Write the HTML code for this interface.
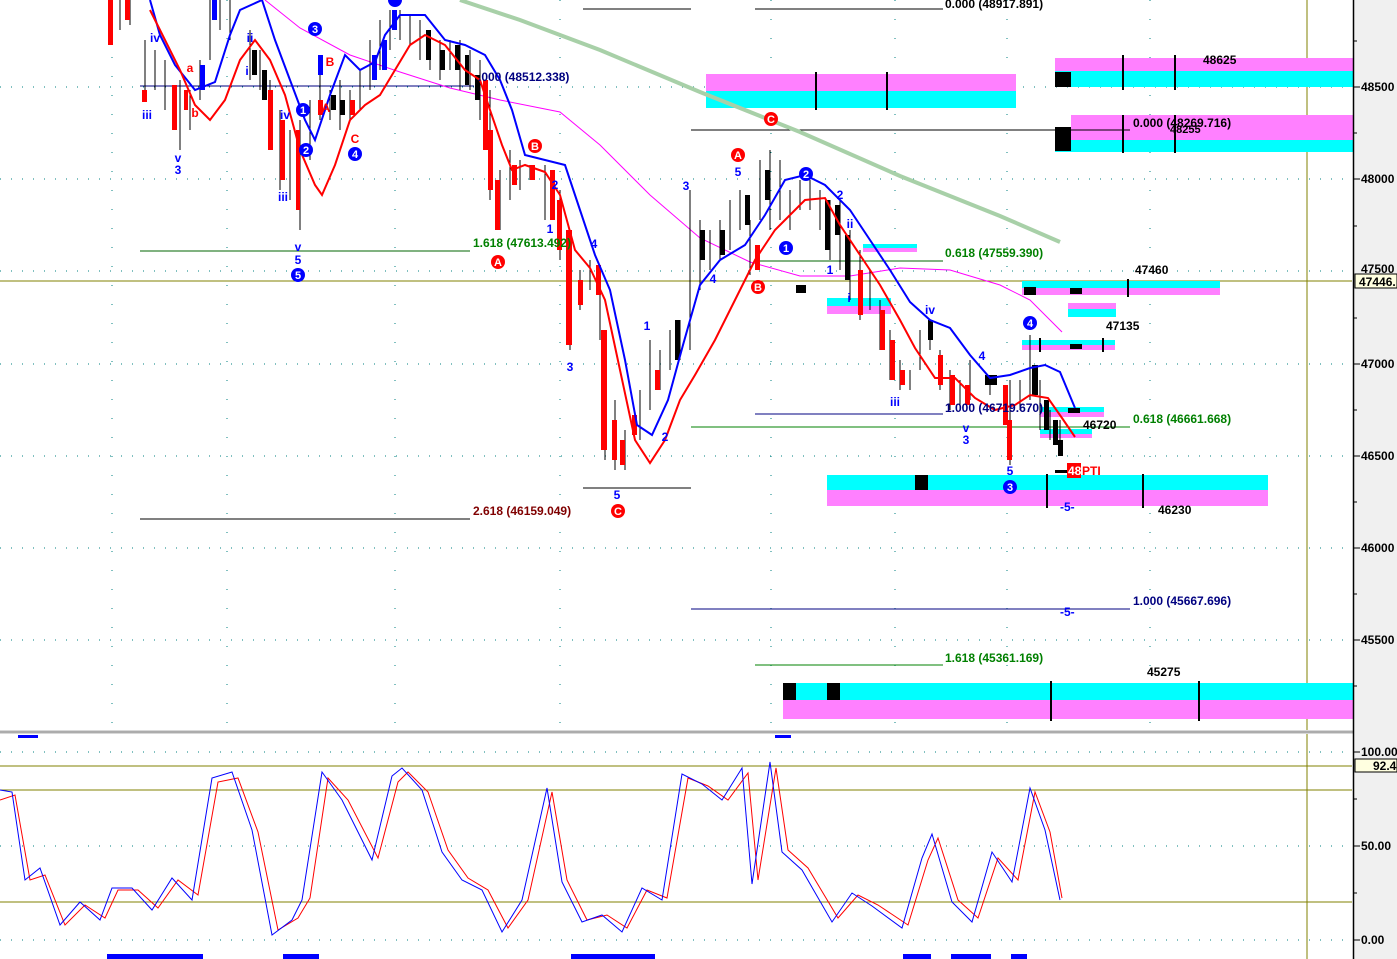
<!DOCTYPE html>
<html><head><meta charset="utf-8"><style>
html,body{margin:0;padding:0;background:#fff;}
svg{display:block;font-family:"Liberation Sans",Arial,sans-serif;font-weight:bold;}
</style></head><body>
<svg width="1397" height="959" viewBox="0 0 1397 959" xmlns="http://www.w3.org/2000/svg">
<rect width="1397" height="959" fill="#fff"/>
<!-- grid -->
<g stroke="#008080" stroke-width="1" stroke-dasharray="1,10">
<line x1="0" y1="87" x2="1352" y2="87"/><line x1="0" y1="179" x2="1352" y2="179"/>
<line x1="0" y1="271" x2="1352" y2="271"/><line x1="0" y1="364" x2="1352" y2="364"/>
<line x1="0" y1="456" x2="1352" y2="456"/><line x1="0" y1="548" x2="1352" y2="548"/>
<line x1="0" y1="640" x2="1352" y2="640"/>
<line x1="0" y1="752" x2="1352" y2="752"/><line x1="0" y1="846" x2="1352" y2="846"/><line x1="0" y1="940" x2="1352" y2="940"/>
</g>
<g stroke="#008080" stroke-width="1" stroke-dasharray="1,18">
<line x1="112" y1="0" x2="112" y2="730"/><line x1="227" y1="0" x2="227" y2="730"/><line x1="395" y1="0" x2="395" y2="730"/>
<line x1="560" y1="0" x2="560" y2="730"/><line x1="771" y1="0" x2="771" y2="730"/><line x1="895" y1="0" x2="895" y2="730"/>
<line x1="1007" y1="0" x2="1007" y2="730"/><line x1="1150" y1="0" x2="1150" y2="730"/>
</g>
<!-- olive lines -->
<g stroke="#808000" stroke-width="1">
<line x1="1307" y1="0" x2="1307" y2="959"/>
<line x1="0" y1="281" x2="1352" y2="281"/>
<line x1="0" y1="766" x2="1352" y2="766"/><line x1="0" y1="790" x2="1352" y2="790"/><line x1="0" y1="902" x2="1352" y2="902"/>
</g>
<!-- boxes -->
<rect x="706" y="74" width="310" height="17" fill="#ff80ff"/><rect x="706" y="91" width="310" height="17" fill="#00ffff"/>
<rect x="1055" y="58" width="298" height="13" fill="#ff80ff"/><rect x="1055" y="71" width="298" height="16" fill="#00ffff"/>
<rect x="1055" y="72" width="16" height="15" fill="#000"/>
<rect x="1071" y="115" width="282" height="25" fill="#ff80ff"/><rect x="1055" y="140" width="298" height="12" fill="#00ffff"/>
<rect x="1055" y="127" width="16" height="24" fill="#000"/>
<rect x="827" y="475" width="441" height="15" fill="#00ffff"/><rect x="827" y="490" width="441" height="16" fill="#ff80ff"/>
<rect x="915" y="475" width="13" height="15" fill="#000"/>
<rect x="783" y="683" width="570" height="17" fill="#00ffff"/><rect x="783" y="700" width="570" height="19" fill="#ff80ff"/>
<rect x="783" y="683" width="13" height="17" fill="#000"/><rect x="827" y="683" width="13" height="17" fill="#000"/>
<rect x="1022" y="281" width="198" height="7" fill="#00ffff"/><rect x="1022" y="288" width="198" height="7" fill="#ff80ff"/>
<rect x="1022" y="340" width="93" height="5" fill="#00ffff"/><rect x="1022" y="345" width="93" height="5" fill="#ff80ff"/>
<rect x="1068" y="303" width="48" height="6" fill="#ff80ff"/><rect x="1068" y="309" width="48" height="8" fill="#00ffff"/>
<rect x="863" y="244" width="54" height="4" fill="#00ffff"/><rect x="863" y="248" width="54" height="4" fill="#ff80ff"/>
<rect x="827" y="298" width="64" height="8" fill="#00ffff"/><rect x="827" y="306" width="64" height="8" fill="#ff80ff"/>
<rect x="1040" y="407" width="64" height="5" fill="#00ffff"/><rect x="1040" y="412" width="64" height="5" fill="#ff80ff"/>
<rect x="1040" y="429" width="52" height="5" fill="#00ffff"/><rect x="1040" y="434" width="52" height="4" fill="#ff80ff"/>
<g stroke="#000" stroke-width="2">
<line x1="816" y1="72" x2="816" y2="110"/><line x1="887" y1="72" x2="887" y2="110"/>
<line x1="1123" y1="55" x2="1123" y2="90"/><line x1="1175" y1="55" x2="1175" y2="90"/>
<line x1="1123" y1="115" x2="1123" y2="153"/><line x1="1175" y1="115" x2="1175" y2="153"/>
<line x1="1047" y1="474" x2="1047" y2="508"/><line x1="1143" y1="474" x2="1143" y2="508"/>
<line x1="1051" y1="681" x2="1051" y2="721"/><line x1="1199" y1="681" x2="1199" y2="721"/>
<line x1="1128" y1="279" x2="1128" y2="297"/><line x1="1103" y1="338" x2="1103" y2="352"/><line x1="1040" y1="338" x2="1040" y2="352"/>
</g>
<rect x="1024" y="287" width="12" height="8" fill="#000"/><rect x="1070" y="288" width="12" height="6" fill="#000"/>
<rect x="1070" y="344" width="12" height="5" fill="#000"/><rect x="1068" y="408" width="12" height="5" fill="#000"/>
<rect x="796" y="285" width="10" height="8" fill="#000"/>
<!-- fib lines -->
<g stroke-width="1">
<line x1="583" y1="9" x2="691" y2="9" stroke="#000"/><line x1="755" y1="9" x2="943" y2="9" stroke="#000"/>
<line x1="140" y1="86" x2="474" y2="86" stroke="#000080"/>
<line x1="691" y1="130" x2="1130" y2="130" stroke="#000"/>
<line x1="140" y1="251" x2="470" y2="251" stroke="#006400"/>
<line x1="755" y1="261" x2="943" y2="261" stroke="#006400"/>
<line x1="755" y1="414" x2="943" y2="414" stroke="#000080"/>
<line x1="691" y1="427" x2="1130" y2="427" stroke="#008000"/>
<line x1="583" y1="488" x2="691" y2="488" stroke="#000"/>
<line x1="140" y1="519" x2="470" y2="519" stroke="#000"/>
<line x1="691" y1="609" x2="1130" y2="609" stroke="#000080"/>
<line x1="755" y1="665" x2="943" y2="665" stroke="#008000"/>
</g>
<!-- green MA -->
<polyline fill="none" stroke="#a8d0a8" stroke-width="4" points="460,0 520,20 600,50 700,92 800,132 900,176 1000,216 1060,242"/>
<!-- magenta MA -->
<polyline fill="none" stroke="#ff00ff" stroke-width="1" points="265,0 300,28 350,55 400,72 450,88 500,100 560,112 600,145 650,195 700,238 750,262 800,276 850,276 900,268 950,270 1000,285 1030,300 1062,332"/>
<!-- candles (approx) -->
<g stroke="#000" stroke-width="1">
<path d="M110 0V45M120 0V30M130 0V25M145 40V100M155 50V90M165 60V110M180 80V150M190 90V130M200 60V100M210 0V60M220 0V30M230 0V40M250 30V80M260 50V90M270 80V130M280 110V190M290 130V200M300 120V230M310 100V160M320 60V120M330 90V120M340 80V130M350 90V120M360 70V110M370 40V90M380 20V70M390 10V50M400 10V40M410 15V45M420 20V60M430 30V70M440 40V80M450 40V70M460 40V90M470 50V90M480 60V120M490 90V200M500 170V230M510 150V200M520 160V190M530 165V180M545 165V220M560 190V260M570 230V350M580 270V310M590 260V290M600 270V340M605 330V460M615 400V470M625 430V470M640 390V440M650 340V410M660 350V390M670 330V370M680 320V360M690 190V350M700 220V290M710 230V270M720 220V260M730 200V250M740 190V230M750 220V275M760 160V220M770 150V230M780 160V220M790 190V230M800 180V210M810 180V210M820 190V230M830 200V260M840 200V270M850 230V300M860 250V320M870 270V310M880 300V350M890 330V380M900 360V390M910 370V390M920 330V370M930 320V350M940 350V390M950 370V410M960 380V410M970 360V400M990 375V395M1005 390V420M1010 380V465M1020 380V410M1030 335V400M1040 380V430M1050 410V440M1060 420V455"/>
</g>
<g fill="#ff0000">
<rect x="108" y="0" width="5" height="45"/><rect x="125" y="0" width="5" height="20"/><rect x="142" y="90" width="5" height="12"/>
<rect x="172" y="85" width="5" height="45"/><rect x="184" y="90" width="4" height="20"/>
<rect x="268" y="90" width="5" height="60"/><rect x="280" y="120" width="5" height="60"/><rect x="296" y="130" width="4" height="80"/>
<rect x="318" y="100" width="5" height="15"/><rect x="350" y="100" width="5" height="15"/>
<rect x="483" y="80" width="5" height="70"/><rect x="488" y="130" width="5" height="60"/><rect x="495" y="180" width="5" height="50"/>
<rect x="512" y="165" width="5" height="20"/><rect x="530" y="165" width="5" height="15"/>
<rect x="550" y="170" width="5" height="50"/><rect x="557" y="200" width="5" height="50"/>
<rect x="566" y="230" width="6" height="115"/><rect x="578" y="280" width="5" height="25"/>
<rect x="596" y="265" width="5" height="30"/><rect x="601" y="330" width="6" height="120"/><rect x="612" y="420" width="5" height="40"/>
<rect x="620" y="440" width="5" height="25"/><rect x="632" y="415" width="5" height="20"/>
<rect x="655" y="370" width="5" height="20"/><rect x="755" y="245" width="5" height="25"/>
<rect x="858" y="270" width="5" height="45"/><rect x="880" y="310" width="5" height="40"/><rect x="890" y="340" width="5" height="40"/>
<rect x="900" y="370" width="5" height="15"/><rect x="938" y="355" width="5" height="30"/><rect x="950" y="375" width="5" height="30"/>
<rect x="965" y="385" width="5" height="20"/><rect x="1003" y="385" width="5" height="40"/><rect x="1007" y="420" width="5" height="40"/>
</g>
<g fill="#000">
<rect x="252" y="50" width="5" height="25"/><rect x="262" y="70" width="5" height="30"/><rect x="426" y="30" width="5" height="30"/>
<rect x="440" y="50" width="5" height="20"/><rect x="455" y="45" width="5" height="25"/><rect x="465" y="55" width="4" height="30"/>
<rect x="475" y="75" width="5" height="25"/><rect x="331" y="95" width="5" height="15"/><rect x="340" y="100" width="5" height="15"/>
<rect x="675" y="320" width="5" height="40"/><rect x="700" y="230" width="5" height="30"/><rect x="720" y="230" width="5" height="25"/>
<rect x="745" y="195" width="5" height="30"/><rect x="765" y="170" width="5" height="30"/><rect x="825" y="200" width="5" height="50"/>
<rect x="835" y="205" width="5" height="30"/><rect x="845" y="235" width="5" height="45"/><rect x="928" y="320" width="5" height="20"/>
<rect x="985" y="375" width="12" height="10"/><rect x="1032" y="365" width="6" height="30"/><rect x="1044" y="400" width="5" height="30"/>
<rect x="1053" y="420" width="5" height="25"/><rect x="1058" y="440" width="5" height="16"/><rect x="1055" y="470" width="12" height="3"/>
</g>
<g fill="#0000ff">
<rect x="200" y="65" width="5" height="25"/><rect x="212" y="0" width="5" height="20"/><rect x="372" y="55" width="5" height="25"/>
<rect x="382" y="40" width="5" height="30"/><rect x="392" y="10" width="5" height="20"/><rect x="318" y="55" width="5" height="20"/>
</g>
<!-- blue band -->
<polyline fill="none" stroke="#0000ff" stroke-width="2" points="150,0 160,35 175,65 195,90 215,82 230,35 240,10 262,0 275,40 290,80 305,120 315,140 330,95 345,55 360,70 375,62 385,35 400,15 425,15 445,40 465,45 485,55 500,80 512,110 525,155 545,160 565,165 580,210 595,255 610,290 625,360 637,425 652,435 668,400 683,345 700,285 720,260 745,245 765,215 785,180 805,175 825,185 850,210 870,240 890,270 910,302 930,320 950,328 970,355 990,378 1010,375 1030,368 1045,365 1060,372 1075,408"/>
<!-- red band -->
<polyline fill="none" stroke="#ff0000" stroke-width="2" points="150,10 165,40 180,70 195,105 210,120 225,100 240,60 255,40 270,60 285,95 300,150 315,185 322,195 335,165 350,120 365,105 380,95 395,70 410,45 425,35 445,45 465,70 480,80 490,110 502,145 512,170 525,165 545,172 560,195 575,250 590,268 605,300 620,370 635,440 650,463 665,440 680,400 695,375 715,340 735,300 755,260 775,230 790,215 805,200 825,198 840,225 860,255 880,285 900,320 915,348 935,378 955,378 975,398 995,410 1015,405 1030,395 1048,398 1062,418 1075,437"/>
<!-- fib labels -->
<g font-size="12">
<text x="945" y="8" fill="#000">0.000 (48917.891)</text>
<text x="478" y="81" fill="#000080">.000 (48512.338)</text>
<text x="1133" y="127" fill="#000">0.000 (48269.716)</text>
<text x="1170" y="133" fill="#000" font-size="11">48255</text>
<text x="473" y="247" fill="#008000">1.618 (47613.492)</text>
<text x="945" y="257" fill="#008000">0.618 (47559.390)</text>
<text x="945" y="412" fill="#000080">1.000 (46719.670)</text>
<text x="1133" y="423" fill="#008000">0.618 (46661.668)</text>
<text x="473" y="515" fill="#800000">2.618 (46159.049)</text>
<text x="1133" y="605" fill="#000080">1.000 (45667.696)</text>
<text x="945" y="662" fill="#008000">1.618 (45361.169)</text>
<text x="1203" y="64" fill="#000">48625</text>
<text x="1135" y="274" fill="#000">47460</text>
<text x="1106" y="330" fill="#000">47135</text>
<text x="1083" y="429" fill="#000">46720</text>
<text x="1158" y="514" fill="#000">46230</text>
<text x="1147" y="676" fill="#000">45275</text>
<text x="1060" y="511" fill="#0000ff">-5-</text>
<text x="1060" y="616" fill="#0000ff">-5-</text>
</g>
<rect x="1067" y="463" width="14" height="15" fill="#ff0000"/>
<text x="1068" y="475" fill="#fff" font-size="12">48</text>
<text x="1082" y="475" fill="#ff0000" font-size="12">PTI</text>
<!-- wave labels blue -->
<g font-size="12" fill="#0000ff" text-anchor="middle">
<text x="155" y="42">iv</text><text x="147" y="119">iii</text><text x="178" y="162">v</text><text x="178" y="174">3</text>
<text x="250" y="42">ii</text><text x="247" y="75">i</text><text x="285" y="119">iv</text><text x="283" y="201">iii</text>
<text x="298" y="251">v</text><text x="298" y="264">5</text>
<text x="550" y="233">1</text><text x="555" y="189">2</text><text x="594" y="248">4</text><text x="570" y="371">3</text>
<text x="617" y="499">5</text><text x="647" y="330">1</text><text x="665" y="441">2</text><text x="686" y="190">3</text>
<text x="713" y="283">4</text><text x="738" y="176">5</text><text x="830" y="274">1</text><text x="840" y="199">2</text>
<text x="850" y="228">ii</text><text x="849" y="302">i</text><text x="895" y="406">iii</text><text x="930" y="314">iv</text>
<text x="966" y="432">v</text><text x="966" y="444">3</text><text x="982" y="360">4</text><text x="1010" y="475">5</text>
</g>
<g font-size="12" fill="#ff0000" text-anchor="middle">
<text x="190" y="72">a</text><text x="195" y="117">b</text><text x="330" y="66">B</text><text x="326" y="112">A</text><text x="355" y="143">C</text>
</g>
<!-- circled -->
<g font-size="11" text-anchor="middle">
<g fill="#0000ff"><circle cx="315" cy="29" r="7"/><circle cx="303" cy="110" r="7"/><circle cx="306" cy="150" r="7"/><circle cx="355" cy="154" r="7"/><circle cx="298" cy="275" r="7"/><circle cx="395" cy="0" r="7"/><circle cx="786" cy="248" r="7"/><circle cx="806" cy="174" r="7"/><circle cx="1030" cy="323" r="7"/><circle cx="1010" cy="487" r="7"/></g>
<g fill="#fff"><text x="315" y="33">3</text><text x="303" y="114">1</text><text x="306" y="154">2</text><text x="355" y="158">4</text><text x="298" y="279">5</text><text x="786" y="252">1</text><text x="806" y="178">2</text><text x="1030" y="327">4</text><text x="1010" y="491">3</text></g>
<g fill="#ff0000"><circle cx="535" cy="146" r="7"/><circle cx="498" cy="262" r="7"/><circle cx="618" cy="511" r="7"/><circle cx="738" cy="155" r="7"/><circle cx="771" cy="119" r="7"/><circle cx="758" cy="287" r="7"/></g>
<g fill="#fff"><text x="535" y="150">B</text><text x="498" y="266">A</text><text x="618" y="515">C</text><text x="738" y="159">A</text><text x="771" y="123">C</text><text x="758" y="291">B</text></g>
</g>
<!-- separator -->
<rect x="0" y="730" width="1397" height="4" fill="#d8d8d8"/>
<line x1="0" y1="732" x2="1397" y2="732" stroke="#808080"/>
<rect x="18" y="735" width="20" height="3" fill="#0000ff"/><rect x="775" y="735" width="16" height="3" fill="#0000ff"/>
<!-- stochastic -->
<polyline fill="none" stroke="#ff0000" stroke-width="1" points="0,800 15,795 30,880 45,875 65,925 85,905 105,918 118,890 138,890 158,908 178,880 198,895 218,782 238,778 258,832 278,930 298,918 310,898 328,778 348,800 378,858 398,782 408,772 428,792 448,850 468,878 488,890 508,928 528,900 552,792 567,880 587,920 607,915 627,928 647,890 667,898 688,778 708,786 728,800 748,773 758,880 776,768 788,850 808,868 838,918 858,895 878,905 908,925 928,860 938,838 958,900 978,918 998,858 1018,880 1035,792 1050,832 1062,898"/>
<polyline fill="none" stroke="#0000ff" stroke-width="1" points="0,790 12,792 25,880 40,868 60,925 80,902 100,920 112,888 132,888 152,910 172,878 192,900 212,778 232,772 252,830 272,935 292,920 302,900 322,772 342,800 372,860 392,776 402,768 422,790 442,852 462,880 482,890 502,932 522,900 547,788 562,882 582,922 602,915 622,932 642,888 662,900 682,774 702,784 722,800 742,768 752,884 770,762 782,852 802,870 832,922 852,893 872,906 902,928 922,858 932,834 952,902 972,922 992,852 1012,882 1030,788 1045,830 1060,900"/>
<g fill="#0000ff">
<rect x="107" y="954" width="96" height="5"/><rect x="283" y="954" width="36" height="5"/><rect x="571" y="954" width="84" height="5"/>
<rect x="903" y="954" width="28" height="5"/><rect x="951" y="954" width="40" height="5"/><rect x="1011" y="954" width="16" height="5"/>
</g>
<!-- axis panel -->
<rect x="1353" y="0" width="44" height="959" fill="#f0f0f0"/>
<line x1="1353.5" y1="0" x2="1353.5" y2="959" stroke="#000" stroke-width="1.5"/>
<g stroke="#000" stroke-width="1">
<line x1="1354" y1="87" x2="1360" y2="87"/><line x1="1354" y1="179" x2="1360" y2="179"/><line x1="1354" y1="364" x2="1360" y2="364"/>
<line x1="1354" y1="456" x2="1360" y2="456"/><line x1="1354" y1="548" x2="1360" y2="548"/><line x1="1354" y1="640" x2="1360" y2="640"/>
<line x1="1354" y1="752" x2="1360" y2="752"/><line x1="1354" y1="846" x2="1360" y2="846"/><line x1="1354" y1="940" x2="1360" y2="940"/>
<line x1="1354" y1="41" x2="1357" y2="41"/><line x1="1354" y1="133" x2="1357" y2="133"/><line x1="1354" y1="226" x2="1357" y2="226"/>
<line x1="1354" y1="318" x2="1357" y2="318"/><line x1="1354" y1="410" x2="1357" y2="410"/><line x1="1354" y1="502" x2="1357" y2="502"/>
<line x1="1354" y1="594" x2="1357" y2="594"/><line x1="1354" y1="686" x2="1357" y2="686"/><line x1="1354" y1="799" x2="1357" y2="799"/><line x1="1354" y1="893" x2="1357" y2="893"/>
</g>
<g font-size="12" fill="#000">
<text x="1361" y="91">48500</text><text x="1361" y="183">48000</text><text x="1361" y="273">47500</text>
<text x="1361" y="368">47000</text><text x="1361" y="460">46500</text><text x="1361" y="552">46000</text><text x="1361" y="644">45500</text>
<text x="1361" y="756">100.00</text><text x="1361" y="850">50.00</text><text x="1361" y="944">0.00</text>
</g>
<rect x="1355" y="274" width="42" height="14" fill="#ffffe0" stroke="#000"/>
<text x="1359" y="286" font-size="12">47446.</text>
<rect x="1355" y="759" width="42" height="13" fill="#ffffe0" stroke="#000"/>
<text x="1373" y="770" font-size="12">92.4</text>
</svg>
</body></html>
